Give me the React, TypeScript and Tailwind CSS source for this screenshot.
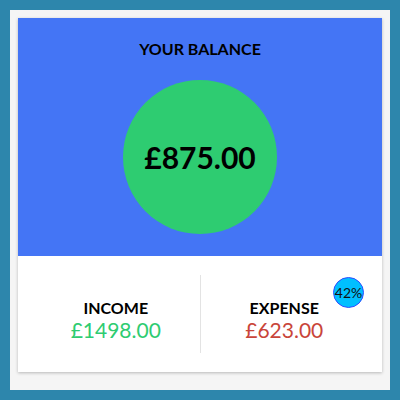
export default function App() {
  const font = { fontFamily: "Lato, 'Open Sans', sans-serif" };
  return (
    <div className="h-[400px] w-[400px] bg-[#2d86ac] p-[10px]" style={font}>
      <div className="h-full bg-[#f5f5f5] p-2">
        <div className="bg-white shadow-[0_1px_3px_rgba(0,0,0,0.25)]">
          {/* balance */}
          <div className="flex h-[238px] flex-col items-center bg-[#4475f5] pt-[23px]">
            <h2 className="text-[16px] font-bold leading-none text-black">YOUR BALANCE</h2>
            <div className="mt-[23px] flex h-[154px] w-[154px] items-center justify-center rounded-full bg-[#2ecc71]">
              <span className="text-[30px] font-bold leading-none text-black">£875.00</span>
            </div>
          </div>

          {/* income / expense */}
          <div className="relative flex h-[116px] px-[14px] py-[19px]">
            <div className="flex flex-1 flex-col items-center border-r border-[#e3e3e3] pt-[25px]">
              <span className="text-[16px] font-bold leading-none text-black">INCOME</span>
              <span className="mt-[3px] text-[21px] leading-none text-[#2ecc71]">£1498.00</span>
            </div>
            <div className="flex flex-1 flex-col items-center pt-[25px]">
              <span className="text-[16px] font-bold leading-none text-black">EXPENSE</span>
              <span className="mt-[3px] text-[21px] leading-none text-[#c9453a]">£623.00</span>
            </div>
            <div className="absolute right-[18px] top-[21px] flex h-[31px] w-[31px] items-center justify-center rounded-full border border-[#2f4cff] bg-[#00bfff] text-[14px] leading-none text-[#111]">
              42%
            </div>
          </div>
        </div>
      </div>
    </div>
  );
}
